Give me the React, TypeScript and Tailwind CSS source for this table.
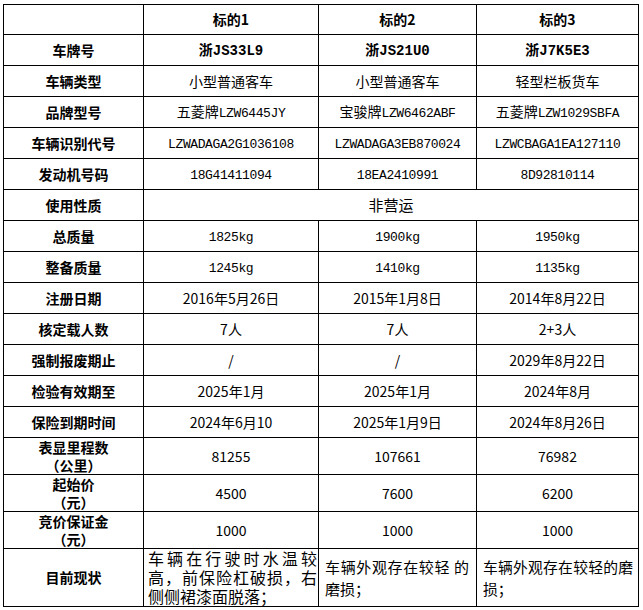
import React from 'react';

const cjk = "font-['Noto_Sans_CJK_SC',sans-serif]";
const mono = "font-['Liberation_Mono','Noto_Sans_CJK_SC',monospace] text-[13px] tracking-[-0.4px]";
const cell = 'border border-black text-center align-middle p-0';
const label = `${cell} font-bold text-[14px] text-black`;

function Code({ zh, code }: { zh?: string; code: string }) {
  return (
    <>
      {zh}
      <span className={mono}>{code}</span>
    </>
  );
}

function Plate({ code }: { code: string }) {
  return (
    <span className="font-bold">
      浙<span className="font-['Liberation_Mono',monospace] text-[14px]">{code}</span>
    </span>
  );
}

type Row = { label: React.ReactNode; cells: React.ReactNode[]; h: string; span?: boolean };

const rows: Row[] = [
  { label: '车牌号', cells: [<Plate code="JS33L9" />, <Plate code="JS21U0" />, <Plate code="J7K5E3" />], h: 'h-[31px]' },
  { label: '车辆类型', cells: ['小型普通客车', '小型普通客车', '轻型栏板货车'], h: 'h-[31px]' },
  {
    label: '品牌型号',
    cells: [<Code zh="五菱牌" code="LZW6445JY" />, <Code zh="宝骏牌" code="LZW6462ABF" />, <Code zh="五菱牌" code="LZW1029SBFA" />],
    h: 'h-[31px]',
  },
  {
    label: '车辆识别代号',
    cells: [<Code code="LZWADAGA2G1036108" />, <Code code="LZWADAGA3EB870024" />, <Code code="LZWCBAGA1EA127110" />],
    h: 'h-[31px]',
  },
  { label: '发动机号码', cells: [<Code code="18G41411094" />, <Code code="18EA2410991" />, <Code code="8D92810114" />], h: 'h-[31px]' },
  { label: '使用性质', cells: ['非营运'], h: 'h-[31px]', span: true },
  { label: '总质量', cells: [<Code code="1825kg" />, <Code code="1900kg" />, <Code code="1950kg" />], h: 'h-[31px]' },
  { label: '整备质量', cells: [<Code code="1245kg" />, <Code code="1410kg" />, <Code code="1135kg" />], h: 'h-[31px]' },
  { label: '注册日期', cells: ['2016年5月26日', '2015年1月8日', '2014年8月22日'], h: 'h-[31px]' },
  { label: '核定载人数', cells: ['7人', '7人', '2+3人'], h: 'h-[31px]' },
  { label: '强制报废期止', cells: ['/', '/', '2029年8月22日'], h: 'h-[31px]' },
  { label: '检验有效期至', cells: ['2025年1月', '2025年1月', '2024年8月'], h: 'h-[31px]' },
  { label: '保险到期时间', cells: ['2024年6月10', '2025年1月9日', '2024年8月26日'], h: 'h-[31px]' },
  {
    label: (
      <>
        表显里程数
        <br />
        （公里）
      </>
    ),
    cells: ['81255', '107661', '76982'],
    h: 'h-[37px]',
  },
  {
    label: (
      <>
        起始价
        <br />
        （元）
      </>
    ),
    cells: ['4500', '7600', '6200'],
    h: 'h-[37px]',
  },
  {
    label: (
      <>
        竞价保证金
        <br />
        （元）
      </>
    ),
    cells: ['1000', '1000', '1000'],
    h: 'h-[37px]',
  },
];

export default function App() {
  return (
    <div className={`bg-white w-[643px] h-[610px] pl-[3px] pt-[4px] ${cjk} text-black`}>
      <table className="table-fixed border-collapse w-[635px]">
        <colgroup>
          <col className="w-[140px]" />
          <col className="w-[175px]" />
          <col className="w-[158px]" />
          <col className="w-[162px]" />
        </colgroup>
        <tbody>
          <tr className="h-[30px]">
            <td className={cell}></td>
            <td className={label}>标的1</td>
            <td className={label}>标的2</td>
            <td className={label}>标的3</td>
          </tr>
          {rows.map((r, i) => (
            <tr key={i} className={r.h}>
              <td className={`${label} leading-[18px]`}>{r.label}</td>
              {r.span ? (
                <td colSpan={3} className={`${cell} text-[15px]`}>
                  {r.cells[0]}
                </td>
              ) : (
                r.cells.map((c, j) => (
                  <td key={j} className={`${cell} text-[14px]`}>
                    {c}
                  </td>
                ))
              )}
            </tr>
          ))}
          <tr className="h-[58px]">
            <td className={label}>目前现状</td>
            <td className={`${cell} align-top`}>
              <div className="text-[16px] leading-[19px] text-justify pl-[4px] pr-[1px]">
                车辆在行驶时水温较高，前保险杠破损，右侧侧裙漆面脱落；
              </div>
            </td>
            <td className={cell}>
              <div className="text-[15px] leading-[22px] text-justify pl-[6px] pr-[7px]">
                车辆外观存在较轻 的磨损；
              </div>
            </td>
            <td className={cell}>
              <div className="text-[14.8px] leading-[22px] text-justify pl-[6px] pr-[5px]">
                车辆外观存在较轻的磨损；
              </div>
            </td>
          </tr>
        </tbody>
      </table>
    </div>
  );
}
